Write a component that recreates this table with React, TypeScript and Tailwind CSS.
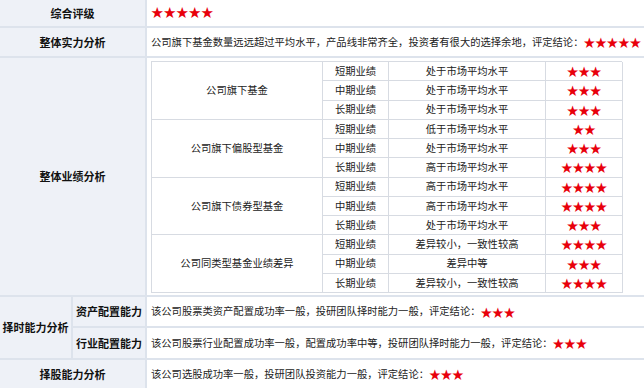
import React from "react";

type Perf = { period: string; desc: string; stars: number };
type Group = { name: string; rows: Perf[] };

const groups: Group[] = [
  {
    name: "公司旗下基金",
    rows: [
      { period: "短期业绩", desc: "处于市场平均水平", stars: 3 },
      { period: "中期业绩", desc: "处于市场平均水平", stars: 3 },
      { period: "长期业绩", desc: "处于市场平均水平", stars: 3 },
    ],
  },
  {
    name: "公司旗下偏股型基金",
    rows: [
      { period: "短期业绩", desc: "低于市场平均水平", stars: 2 },
      { period: "中期业绩", desc: "处于市场平均水平", stars: 3 },
      { period: "长期业绩", desc: "高于市场平均水平", stars: 4 },
    ],
  },
  {
    name: "公司旗下债券型基金",
    rows: [
      { period: "短期业绩", desc: "高于市场平均水平", stars: 4 },
      { period: "中期业绩", desc: "高于市场平均水平", stars: 4 },
      { period: "长期业绩", desc: "处于市场平均水平", stars: 3 },
    ],
  },
  {
    name: "公司同类型基金业绩差异",
    rows: [
      { period: "短期业绩", desc: "差异较小，一致性较高", stars: 4 },
      { period: "中期业绩", desc: "差异中等", stars: 3 },
      { period: "长期业绩", desc: "差异较小，一致性较高", stars: 4 },
    ],
  },
];

function Stars({ n }: { n: number }) {
  return (
    <span className="text-[11.8px] leading-none tracking-[-0.3px] text-[#e8000b]">
      {"★".repeat(n)}
    </span>
  );
}

const label = "font-bold text-[11px] text-[#111]";
const line = "border-b-2 border-[#dde3ec]";

export default function App() {
  return (
    <div
      className="w-[644px] h-[388px] bg-white text-[10.3px] leading-none text-[#222] overflow-hidden"
      style={{ fontFamily: '"Noto Sans CJK SC", "Noto Sans", sans-serif' }}
    >
      {/* 综合评级 */}
      <div className={`flex h-[28px] ${line}`}>
        <div className={`w-[147px] shrink-0 flex items-center justify-center bg-[#eef1f7] border-r-2 border-[#dde3ec] ${label}`}>
          综合评级
        </div>
        <div className="flex items-center pl-[4px] pb-[2px]">
          <span className="text-[12.5px] leading-none text-[#e8000b]">★★★★★</span>
        </div>
      </div>

      {/* 整体实力分析 */}
      <div className={`flex h-[30px] ${line}`}>
        <div className={`w-[147px] shrink-0 flex items-center justify-center bg-[#eef1f7] border-r-2 border-[#dde3ec] ${label}`}>
          整体实力分析
        </div>
        <div className="flex items-center pl-[4px] whitespace-nowrap">
          公司旗下基金数量远远超过平均水平，产品线非常齐全，投资者有很大的选择余地，评定结论：
          <Stars n={5} />
        </div>
      </div>

      {/* 整体业绩分析 */}
      <div className={`flex h-[239px] ${line}`}>
        <div className={`w-[147px] shrink-0 flex items-center justify-center bg-[#eef1f7] border-r-2 border-[#dde3ec] ${label}`}>
          整体业绩分析
        </div>
        <div className="pl-[4px] pt-[3px]">
          <div className="grid w-[471px] h-[232px] grid-cols-[171px_66px_157px_77px] grid-rows-[repeat(12,minmax(0,1fr))] border-t border-l border-[#d7dbe2]">
            {groups.map((g) => (
              <React.Fragment key={g.name}>
                <div className="row-span-3 flex items-center justify-center border-r border-b border-[#d7dbe2]">
                  {g.name}
                </div>
                {g.rows.map((r, i) => (
                  <React.Fragment key={i}>
                    <div className="col-start-2 flex items-center justify-center border-r border-b border-[#d7dbe2]">
                      {r.period}
                    </div>
                    <div className="flex items-center justify-center border-r border-b border-[#d7dbe2]">
                      {r.desc}
                    </div>
                    <div className="flex items-center justify-center border-r border-b border-[#d7dbe2]">
                      <Stars n={r.stars} />
                    </div>
                  </React.Fragment>
                ))}
              </React.Fragment>
            ))}
          </div>
        </div>
      </div>

      {/* 择时能力分析 */}
      <div className={`flex h-[63px] ${line}`}>
        <div className="w-[147px] shrink-0 flex bg-[#eef1f7] border-r-2 border-[#dde3ec]">
          <div className={`w-[73px] shrink-0 flex items-center justify-center border-r-2 border-[#dde3ec] ${label}`}>
            择时能力分析
          </div>
          <div className="flex-1 flex flex-col">
            <div className={`h-[31px] flex items-center justify-center ${line} ${label}`}>资产配置能力</div>
            <div className={`flex-1 flex items-center justify-center ${label}`}>行业配置能力</div>
          </div>
        </div>
        <div className="flex-1 flex flex-col">
          <div className={`h-[31px] flex items-center pl-[4px] ${line}`}>
            该公司股票类资产配置成功率一般，投研团队择时能力一般，评定结论：
            <Stars n={3} />
          </div>
          <div className="flex-1 flex items-center pl-[4px]">
            该公司股票行业配置成功率一般，配置成功率中等，投研团队择时能力一般，评定结论：
            <Stars n={3} />
          </div>
        </div>
      </div>

      {/* 择股能力分析 */}
      <div className="flex h-[28px]">
        <div className={`w-[147px] shrink-0 flex items-center justify-center bg-[#eef1f7] border-r-2 border-[#dde3ec] ${label}`}>
          择股能力分析
        </div>
        <div className="flex items-center pl-[4px]">
          该公司选股成功率一般，投研团队投资能力一般，评定结论：
          <Stars n={3} />
        </div>
      </div>
    </div>
  );
}
